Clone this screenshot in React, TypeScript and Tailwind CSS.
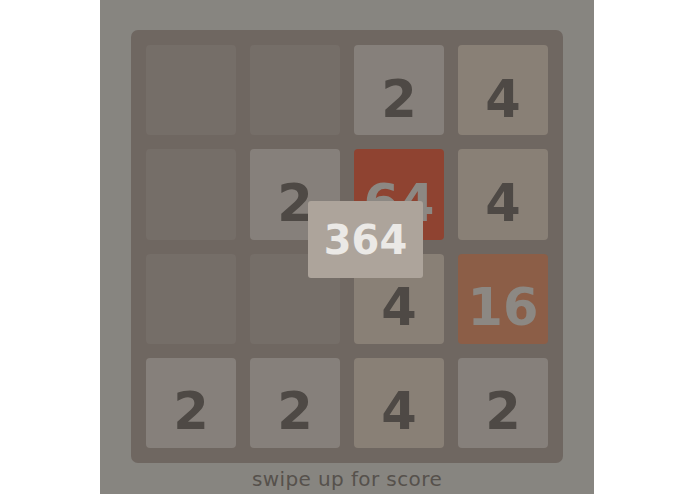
const tiles: (number | null)[] = [
  null, null, 2, 4,
  null, 2, 64, 4,
  null, null, 4, 16,
  2, 2, 4, 2,
];

const tileStyle = (v: number | null) => {
  switch (v) {
    case 2:
      return "bg-[#86807b] text-[#4e4945]";
    case 4:
      return "bg-[#898076] text-[#4e4945]";
    case 16:
      return "bg-[#8c5e47] text-[#8c8883]";
    case 64:
      return "bg-[#8f4331] text-[#8c8883]";
    default:
      return "bg-[#756e68]";
  }
};

const App = () => {
  return (
    <div className="w-[695px] h-[494px] bg-white overflow-hidden font-['DejaVu_Sans',sans-serif]">
      <div className="ml-[100px] w-[494px] h-[494px] bg-[#878580] pt-[30px] pl-[31px]">
        {/* Board */}
        <div className="relative w-[432px] h-[433px] rounded-[7px] bg-[#6f6761] p-[15px] grid grid-cols-4 gap-[14px]">
          {tiles.map((v, i) => (
            <div
              key={i}
              className={`rounded-[4px] flex items-center justify-center pt-[18px] text-[51px] font-bold leading-none ${tileStyle(v)}`}
            >
              {v ?? ""}
            </div>
          ))}

          {/* Score popup */}
          <div className="absolute left-[177px] top-[171px] w-[115px] h-[77px] rounded-[3px] bg-[#ada49b] flex items-center justify-center text-[40px] font-bold text-[#ebe9e6]">
            364
          </div>
        </div>

        <p className="w-[432px] text-center text-[20px] leading-none mt-[6px] text-[#56514c] tracking-[0.4px]">
          swipe up for score
        </p>
      </div>
    </div>
  );
};

export default App;
